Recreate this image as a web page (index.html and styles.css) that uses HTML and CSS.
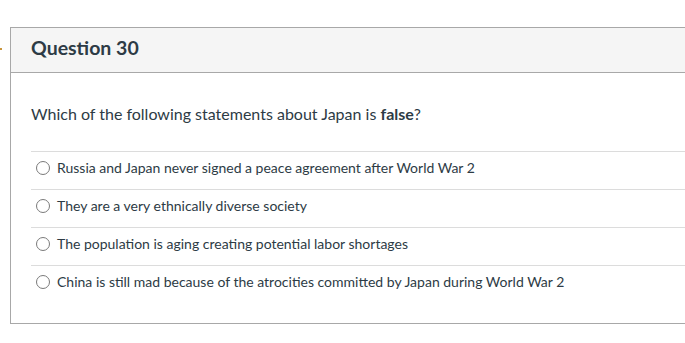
FILE: index.html
```html
<!DOCTYPE html>
<html lang="en">
<head>
<meta charset="utf-8">
<title>Question 30</title>
<link rel="stylesheet" href="styles.css">
</head>
<body>
<span class="flag-mark"></span>
<div class="question-card">
  <div class="question-header">
    <h2 class="question-title">Question 30</h2>
  </div>
  <div class="question-body">
    <p class="question-text">Which of the following statements about Japan is <strong>false</strong>?</p>
    <ul class="answers">
      <li class="answer"><span class="radio"></span><span class="answer-label">Russia and Japan never signed a peace agreement after World War 2</span></li>
      <li class="answer"><span class="radio"></span><span class="answer-label">They are a very ethnically diverse society</span></li>
      <li class="answer"><span class="radio"></span><span class="answer-label">The population is aging creating potential labor shortages</span></li>
      <li class="answer"><span class="radio"></span><span class="answer-label">China is still mad because of the atrocities committed by Japan during World War 2</span></li>
    </ul>
  </div>
</div>
</body>
</html>
```

FILE: styles.css
```css
html, body {
  margin: 0;
  padding: 0;
  background: #ffffff;
  overflow: hidden;
}

body {
  font-family: Lato, "Open Sans", sans-serif;
  color: #2d3b45;
  position: relative;
  width: 685px;
  height: 343px;
}

.flag-mark {
  position: absolute;
  left: 0;
  top: 48px;
  width: 2px;
  height: 2px;
  background: #c8953c;
}

.question-card {
  margin: 27px 0 0 10px;
  border: 1px solid #a8a8a8;
  border-right: none;
}

.question-header {
  background: #f5f5f5;
  border-bottom: 1px solid #a8a8a8;
  height: 45px;
  box-sizing: border-box;
  display: flex;
  align-items: center;
  padding: 0 0 4px 20px;
}

.question-title {
  margin: 0;
  font-size: 19.5px;
  font-weight: 700;
  line-height: 22px;
}

.question-body {
  padding: 31px 0 20px 20px;
}

.question-text {
  margin: 0 0 27px 0;
  font-size: 16px;
  line-height: 20px;
}

.question-text strong {
  font-weight: 700;
}

.answers {
  list-style: none;
  margin: 0;
  padding: 0;
}

.answer {
  display: flex;
  align-items: center;
  height: 37px;
  box-sizing: content-box;
  border-top: 1px solid #dcdcdc;
  padding: 0 0 0 5px;
  font-size: 14px;
}

.answer > * {
  position: relative;
  top: -3px;
}

.radio {
  width: 12px;
  height: 12px;
  border: 1px solid #7a7a7a;
  border-radius: 50%;
  margin-right: 7px;
  flex: none;
}

.answer-label {
  line-height: 18px;
}
```
